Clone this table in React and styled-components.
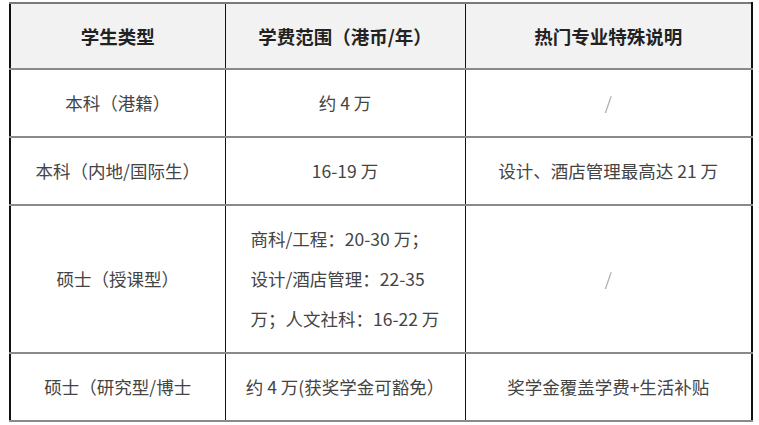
import React from "react";
import styled, { createGlobalStyle } from "styled-components";

const Global = createGlobalStyle`
  html, body { margin: 0; padding: 0; background: #fff; }
  body { font-family: "Noto Sans CJK SC", "Liberation Sans", sans-serif; }
`;

const Page = styled.div`
  padding: 2px 0 0 9px;
`;

const Table = styled.table`
  border-collapse: collapse;
  width: 742px;
  table-layout: fixed;
  border-top: 2px solid #7a7a7a;
  border-bottom: 2px solid #7a7a7a;
  border-left: 2px solid #111;
  border-right: 2px solid #111;
`;

const Th = styled.th`
  background: #f2f2f2;
  color: #222;
  font-weight: 700;
  font-size: 18.5px;
  height: 64px;
  padding: 0 10px;
  text-align: center;
  border-right: 1.5px solid #111;
  border-bottom: 2px solid #8a8a8a;
`;

const Td = styled.td`
  color: #444;
  font-size: 17.5px;
  line-height: 40px;
  padding: ${(p) => (p.$left ? "13px 10px 13px 25px" : "13px 10px")};
  text-align: ${(p) => (p.$left ? "left" : "center")};
  border-right: 1.5px solid #111;
  border-bottom: 2px solid #8a8a8a;
  vertical-align: middle;
  white-space: nowrap;
`;

const Line = styled.div`
  display: block;
`;

const Slash = styled.span`
  color: #888;
  font-weight: 300;
`;

const rows = [
  ["本科（港籍）", "约 4 万", null],
  ["本科（内地/国际生）", "16-19 万", "设计、酒店管理最高达 21 万"],
  ["硕士（授课型）", ["商科/工程：20-30 万；", "设计/酒店管理：22-35", "万；人文社科：16-22 万"], null],
  ["硕士（研究型/博士", "约 4 万(获奖学金可豁免）", "奖学金覆盖学费+生活补贴"],
];

export default function App() {
  return (
    <>
      <Global />
      <Page>
        <Table>
          <colgroup>
            <col style={{ width: 215 }} />
            <col style={{ width: 240 }} />
            <col style={{ width: 287 }} />
          </colgroup>
          <thead>
            <tr>
              <Th>学生类型</Th>
              <Th>学费范围（港币/年）</Th>
              <Th>热门专业特殊说明</Th>
            </tr>
          </thead>
          <tbody>
            {rows.map(([a, b, c], i) => {
              const multi = Array.isArray(b);
              return (
                <tr key={i}>
                  <Td>{a}</Td>
                  <Td $left={multi}>
                    {multi ? b.map((l) => <Line key={l}>{l}</Line>) : b}
                  </Td>
                  <Td>{c ?? <Slash>/</Slash>}</Td>
                </tr>
              );
            })}
          </tbody>
        </Table>
      </Page>
    </>
  );
}
